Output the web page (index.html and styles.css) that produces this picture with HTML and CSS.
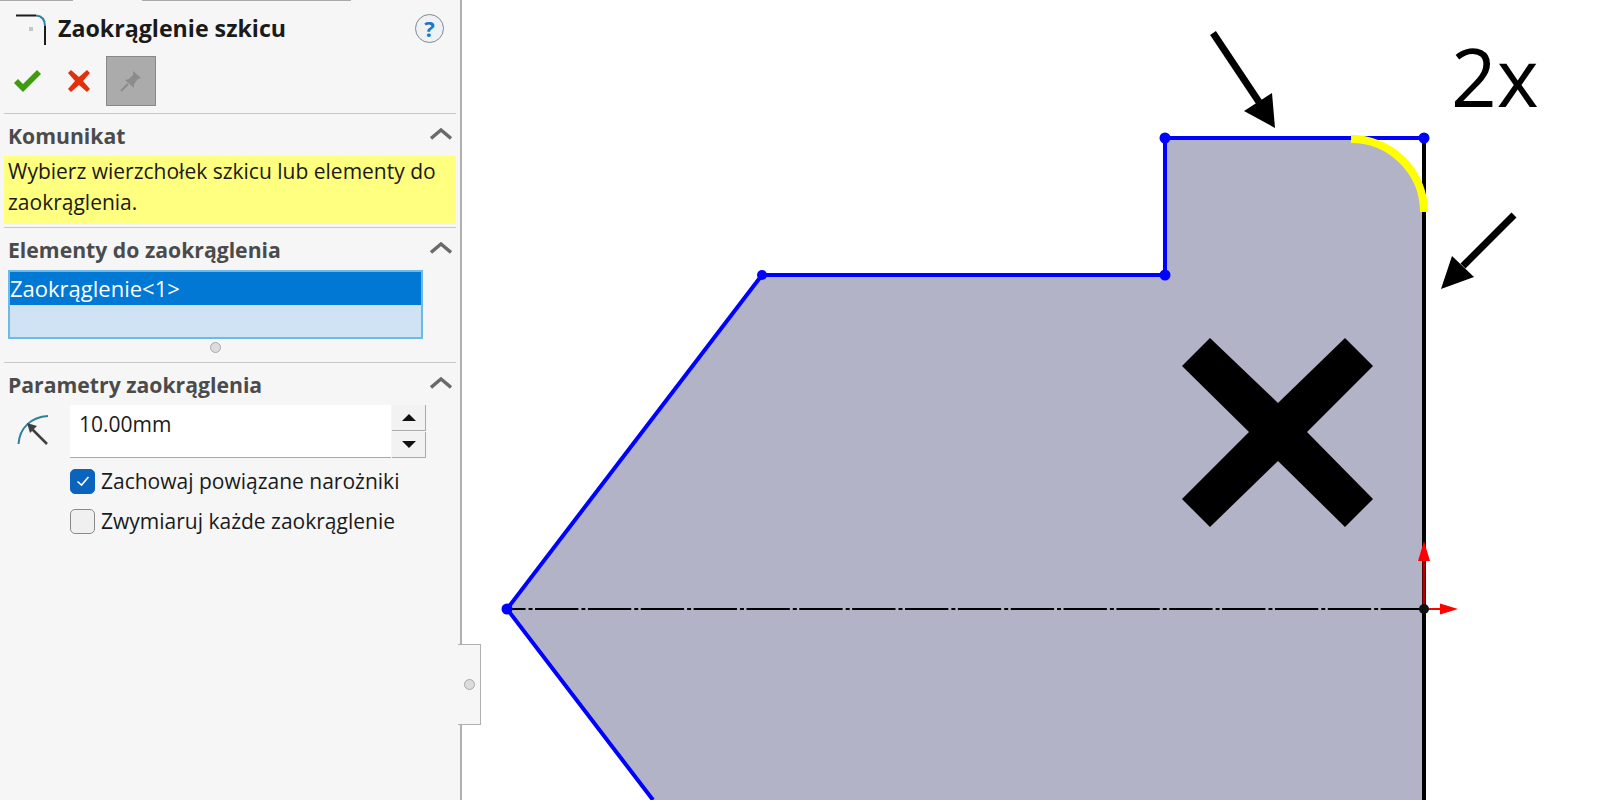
FILE: index.html
```html
<!DOCTYPE html>
<html lang="pl">

<head>
    <meta charset="UTF-8">
    <title>Zaokrąglenie szkicu</title>
    <link rel="stylesheet" href="styles.css">
</head>

<body>
    <div class="panel">
        <div class="tabs"><span class="tabs-a"></span><span class="tabs-b"></span></div>

        <div class="title-row">
            <svg class="title-icon" width="32" height="32" viewBox="0 0 32 32">
                <path d="M1 1.5H21" stroke="#1c1c1c" stroke-width="2" fill="none" />
                <path d="M21 1.5C27 2 30 6 30 12" stroke="#2f7fa8" stroke-width="2" fill="none" />
                <path d="M30 12V31" stroke="#1c1c1c" stroke-width="2" fill="none" />
                <rect x="14" y="13" width="4" height="4" fill="#c4c8cc" />
            </svg>
            <span class="title">Zaokrąglenie szkicu</span>
            <span class="help">?</span>
        </div>

        <div class="tools">
            <svg class="tool-ok" width="28" height="24" viewBox="0 0 28 24">
                <path d="M1 14L5 10L10 15L24 1L28 5L10 23Z" fill="#3f9b10" />
            </svg>
            <svg class="tool-no" width="24" height="24" viewBox="0 0 24 24">
                <path d="M4 1L12 8L20 1L23 4L16 12L23 20L20 23L12 16L4 23L1 20L8 12L1 4Z" fill="#e0300c" />
            </svg>
            <div class="pin">
                <svg width="22" height="22" viewBox="0 0 22 22">
                    <path d="M13 1L21 8L18 9L14 14L14 18L5 10L9 9L13 5Z" fill="#8c8c8c" />
                    <path d="M8 14L1 21" stroke="#8c8c8c" stroke-width="2" />
                </svg>
            </div>
        </div>

        <div class="section section-msg">
            <div class="section-head">Komunikat
                <svg class="chevron" width="22" height="12" viewBox="0 0 22 12"><path d="M1 10.5L11 2L21 10.5" /></svg>
            </div>
            <div class="message">Wybierz wierzchołek szkicu lub elementy do<br>zaokrąglenia.</div>
        </div>

        <div class="section">
            <div class="section-head">Elementy do zaokrąglenia
                <svg class="chevron" width="22" height="12" viewBox="0 0 22 12"><path d="M1 10.5L11 2L21 10.5" /></svg>
            </div>
            <div class="listbox">
                <div class="list-item">Zaokrąglenie&lt;1&gt;</div>
            </div>
            <div class="grip-row"><span class="grip"></span></div>
        </div>

        <div class="section">
            <div class="section-head">Parametry zaokrąglenia
                <svg class="chevron" width="22" height="12" viewBox="0 0 22 12"><path d="M1 10.5L11 2L21 10.5" /></svg>
            </div>
            <div class="param-row">
                <svg class="radius-icon" width="32" height="32" viewBox="0 0 32 32">
                    <path d="M1.5 30C2.5 14 14 3 31 2" stroke="#2f7f9f" stroke-width="2" fill="none" />
                    <path d="M30 30L13 13" stroke="#404040" stroke-width="2.5" />
                    <path d="M10 9L20 12L13 19Z" fill="#404040" />
                </svg>
                <div class="value">10.00mm</div>
                <div class="spin">
                    <div class="spin-btn"><span class="tri-up"></span></div>
                    <div class="spin-btn"><span class="tri-down"></span></div>
                </div>
            </div>
            <label class="check-row">
                <span class="box box-on">
                    <svg width="16" height="14" viewBox="0 0 16 14"><path d="M2.5 7.5L6.5 11L13.5 3" fill="none" stroke="#fff" stroke-width="1.6" /></svg>
                </span>
                Zachowaj powiązane narożniki
            </label>
            <label class="check-row">
                <span class="box"></span>
                Zwymiaruj każde zaokrąglenie
            </label>
        </div>

        <div class="side-tab"><span class="grip"></span></div>
    </div>

    <svg class="canvas" width="1138" height="800" viewBox="462 0 1138 800">
        <path d="M507 609L762 275H1165V138H1351A73 74 0 0 1 1424 212V800H653Z" fill="#b3b3c7" />
        <path d="M1424 609H507" stroke="#000" stroke-width="2" stroke-dasharray="43.35 2.5 4 3" fill="none" />

        <path d="M653 800L507 609L762 275H1165V138H1424" stroke="#0000ff" stroke-width="4" fill="none" />
        <path d="M1424 138V800" stroke="#000" stroke-width="4" fill="none" />
        <path d="M1351 139A73 73 0 0 1 1424 212" stroke="#ffff00" stroke-width="8" fill="none" />

        <circle cx="507" cy="609" r="5.5" fill="#0000ff" />
        <circle cx="762" cy="275" r="5" fill="#0000ff" />
        <circle cx="1165" cy="275" r="5.5" fill="#0000ff" />
        <circle cx="1165" cy="138" r="5.5" fill="#0000ff" />
        <circle cx="1424" cy="138" r="5.5" fill="#0000ff" />

        <path d="M1424 609V555" stroke="#b00000" stroke-width="3" />
        <path d="M1424 541L1430 561H1418Z" fill="#ff0000" />
        <path d="M1424 609H1442" stroke="#ff0000" stroke-width="2" />
        <path d="M1458 609L1440 603.5V614.5Z" fill="#ff0000" />
        <circle cx="1424" cy="609" r="5" fill="#111" />

        <path d="M1210 338L1278 403L1345 338L1373 366L1307 432L1373 499L1345 527L1278 461L1210 527L1182 499L1249 432L1182 366Z" fill="#000" />

        <path d="M1213 33L1259 102" stroke="#000" stroke-width="7" />
        <path d="M1275 128L1244 111L1272 93Z" fill="#000" />
        <path d="M1514 215L1463 266" stroke="#000" stroke-width="7" />
        <path d="M1441 289L1452 256L1474 277Z" fill="#000" />

        <text class="note" x="1451" y="107">2x</text>
    </svg>
</body>

</html>
```

FILE: styles.css
```css
/*page*/
body {
    margin: 0;
    width: 1600px;
    height: 800px;
    display: flex;
    overflow: hidden;
    background-color: white;
    font-family: "Open Sans", "Noto Sans", sans-serif;
}

/*left property panel*/
.panel {
    position: relative;
    width: 452px;
    height: 800px;
    flex: none;
    padding: 0 4px;
    background-color: #f6f6f6;
    border-right: 2px solid #b0b0b0;
}

.tabs {
    height: 1px;
    margin: 0 -4px;
    display: flex;
}

.tabs-a {
    width: 73px;
    background-color: #aaa;
}

.tabs-b {
    width: 209px;
    margin-left: 69px;
    background-color: #aaa;
}

/*title*/
.title-row {
    height: 54px;
    display: flex;
    align-items: center;
}

.title-icon {
    margin-left: 11px;
    margin-top: 3px;
}

.title {
    margin-left: 11px;
    font-size: 23.2px;
    font-weight: 700;
    color: #1a1a1a;
}

.help {
    margin-left: auto;
    margin-right: 12px;
    width: 27px;
    height: 27px;
    line-height: 27px;
    border: 1px solid #7d8a94;
    border-radius: 50%;
    text-align: center;
    font-size: 22px;
    font-weight: 700;
    color: #1f74c4;
    background-color: #eef2f5;
}

/*ok, cancel, pin*/
.tools {
    height: 58px;
    display: flex;
    align-items: flex-start;
}

.tool-ok {
    margin: 14px 0 0 9px;
}

.tool-no {
    margin: 14px 0 0 26px;
}

.pin {
    margin: 1px 0 0 15px;
    width: 48px;
    height: 48px;
    border: 1px solid #888;
    background-color: #ababab;
    display: flex;
    align-items: center;
    justify-content: center;
}

/*sections*/
.section {
    border-top: 1px solid #c8c8c8;
    padding-bottom: 2px;
}

.section-msg {
    padding-bottom: 3px;
}

.section-head {
    height: 42px;
    line-height: 44px;
    padding-left: 4px;
    display: flex;
    justify-content: space-between;
    font-size: 21.2px;
    font-weight: 700;
    color: #4b4b4b;
}

.chevron {
    margin: 14px 4px 0 0;
}

.chevron path {
    fill: none;
    stroke: #6a6a6a;
    stroke-width: 3.4;
}

.message {
    height: 68px;
    padding-left: 4px;
    line-height: 31px;
    font-size: 21px;
    color: #1a1a1a;
    background-color: #ffff80;
}

.listbox {
    margin-left: 4px;
    width: 411px;
    height: 65px;
    border: 2px solid #6db9e8;
    background-color: #cfe3f5;
}

.list-item {
    height: 33px;
    line-height: 33px;
    font-size: 22px;
    color: white;
    background-color: #0078d4;
}

.grip-row {
    height: 17px;
    padding-bottom: 4px;
    display: flex;
    justify-content: center;
    align-items: center;
    width: 422px;
}

.grip {
    display: block;
    width: 9px;
    height: 9px;
    border: 1px solid #a8a8a8;
    border-radius: 50%;
    background-color: #dcdcdc;
}

/*radius row*/
.param-row {
    display: flex;
    height: 53px;
}

.radius-icon {
    margin: 9px 0 0 13px;
}

.value {
    margin-left: 21px;
    width: 312px;
    height: 52px;
    padding-left: 9px;
    line-height: 38px;
    font-size: 21px;
    color: #1a1a1a;
    background-color: white;
    border-bottom: 1px solid #aaa;
}

.spin {
    margin-left: 1px;
    width: 34px;
}

.spin-btn {
    height: 25px;
    margin-bottom: 1px;
    background-color: #f2f2f2;
    border-right: 1px solid #aaa;
    border-bottom: 1px solid #aaa;
    display: flex;
    align-items: center;
    justify-content: center;
}

.tri-up {
    border-left: 7px solid transparent;
    border-right: 7px solid transparent;
    border-bottom: 7px solid #111;
}

.tri-down {
    border-left: 7px solid transparent;
    border-right: 7px solid transparent;
    border-top: 7px solid #111;
}

/*check boxes*/
.check-row {
    height: 40px;
    margin-left: 66px;
    display: flex;
    align-items: center;
    gap: 6px;
    font-size: 21px;
    color: #1a1a1a;
}

.param-row + .check-row {
    margin-top: 3px;
}

.box {
    width: 23px;
    height: 23px;
    border: 1px solid #8a8a8a;
    border-radius: 5px;
    background-color: #f0f0f0;
    display: flex;
    align-items: center;
    justify-content: center;
}

.box-on {
    border-color: #0a63bd;
    background-color: #0a63bd;
}

/*tab sticking out of the panel*/
.side-tab {
    position: absolute;
    left: 458px;
    top: 644px;
    width: 22px;
    height: 79px;
    background-color: #f6f6f6;
    border: 1px solid #b0b0b0;
    border-left: none;
    display: flex;
    align-items: center;
    justify-content: center;
}

/*drawing*/
.canvas {
    flex: none;
    display: block;
}

.note {
    font-size: 80px;
    fill: #000;
}
```
